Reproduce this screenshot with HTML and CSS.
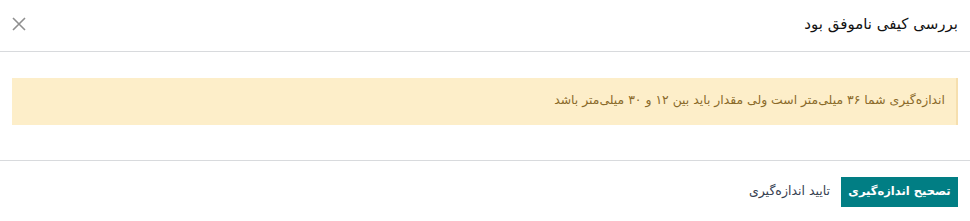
FILE: index.html
```html
<!DOCTYPE html>
<html lang="fa" dir="rtl">
<head>
<meta charset="utf-8">
<link rel="stylesheet" href="styles.css">
</head>
<body>
<div class="dialog">
  <header class="dlg-header">
    <h4 class="dlg-title">بررسی کیفی ناموفق بود</h4>
    <button class="dlg-close" aria-label="Close">
      <svg width="14" height="14" viewBox="0 0 14 14"><path d="M1 1L13 13M13 1L1 13" stroke="#8f8f8f" stroke-width="1.6" fill="none"/></svg>
    </button>
  </header>
  <main class="dlg-body">
    <div class="alert">اندازه‌گیری شما ۳۶ میلی‌متر است ولی مقدار باید بین ۱۲ و ۳۰ میلی‌متر باشد</div>
  </main>
  <footer class="dlg-footer">
    <button class="btn btn-primary">تصحیح اندازه‌گیری</button>
    <button class="btn btn-link">تایید اندازه‌گیری</button>
  </footer>
</div>
</body>
</html>
```
FILE: styles.css
```css
html, body {
  margin: 0;
  padding: 0;
  background: #fff;
}
body {
  font-family: "DejaVu Sans", "Noto Sans", sans-serif;
  color: #212529;
  width: 970px;
  height: 221px;
  overflow: hidden;
}
.dialog {
  display: flex;
  flex-direction: column;
}
.dlg-header {
  display: flex;
  align-items: center;
  justify-content: space-between;
  height: 51px;
  padding: 0 12px 0 12px;
  border-bottom: 1px solid #d8dadd;
}
.dlg-title {
  margin: 0 0 3px 0;
  font-size: 15px;
  font-weight: normal;
  color: #111;
}
.dlg-close {
  border: 0;
  background: none;
  padding: 0;
  width: 14px;
  height: 14px;
  display: flex;
  margin-bottom: 3px;
  cursor: pointer;
}
.dlg-body {
  padding: 26px 12px 35px 12px;
  border-bottom: 1px solid #d8dadd;
}
.alert {
  background: #fdeec9;
  border-right: 2px solid #f6dfae;
  color: #8a6a2a;
  font-size: 12.4px;
  height: 47px;
  box-sizing: border-box;
  display: flex;
  align-items: center;
  padding: 0 11px 4px 11px;
}
.dlg-footer {
  display: flex;
  align-items: center;
  gap: 11px;
  padding: 16px 12px 0 12px;
}
.btn {
  font-family: inherit;
  font-size: 12.5px;
  border: 0;
  height: 30px;
  cursor: pointer;
  white-space: nowrap;
}
.btn-primary {
  background: #017e84;
  color: #fff;
  font-weight: bold;
  font-size: 11.5px;
  width: 117px;
  padding: 0 0 3px 0;
}
.btn-link {
  background: none;
  color: #374151;
  padding: 0 0 3px 0;
}
```
